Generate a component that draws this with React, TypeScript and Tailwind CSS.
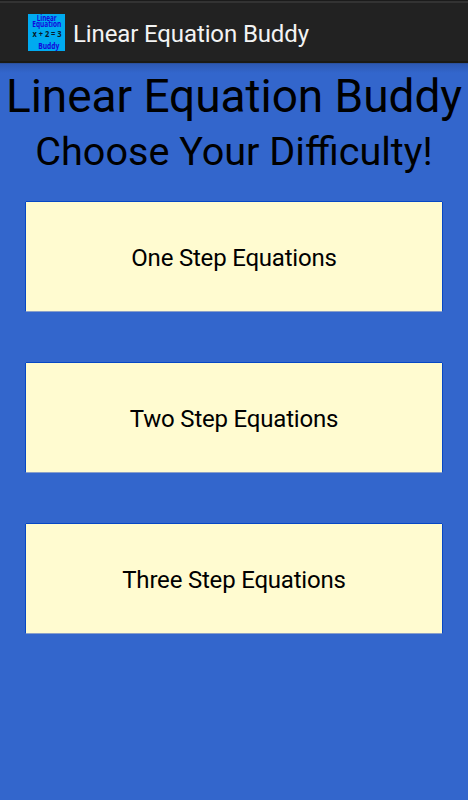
const levels = ["One Step Equations", "Two Step Equations", "Three Step Equations"];

function AppIcon() {
  return (
    <svg
      viewBox="0 0 37 37"
      className="h-[37px] w-[37px] shrink-0 bg-[#00aaf0] font-['Open_Sans',sans-serif] text-[8.4px] font-bold"
      fill="#1408dc"
    >
      <text x="8.7" y="6.9" textLength="20" lengthAdjust="spacingAndGlyphs">Linear</text>
      <text x="4.3" y="12.9" textLength="29" lengthAdjust="spacingAndGlyphs">Equation</text>
      <text x="4.5" y="23.2" textLength="29" lengthAdjust="spacingAndGlyphs" fill="#061a2c">x + 2 = 3</text>
      <text x="10.2" y="34.8" textLength="21" lengthAdjust="spacingAndGlyphs">Buddy</text>
    </svg>
  );
}

export default function App() {
  return (
    <div className="flex h-[800px] w-full flex-col overflow-hidden bg-[#3366cc] font-[Roboto,sans-serif] text-black">
      <header className="flex h-[63px] shrink-0 items-center border-t border-[#1b1b1b] bg-[linear-gradient(#333_0px,#333_2px,#222_2px,#222_60px,#1b1a14_60px)] pt-[1px] pl-[28px]">
        <AppIcon />
        <span className="mt-[2px] ml-[8px] text-[24px] leading-[28px] tracking-[-0.12px] whitespace-nowrap text-[#f3f3f3]">Linear Equation Buddy</span>
      </header>
      <main className="flex flex-1 flex-col items-center bg-[linear-gradient(#2a4a88_0px,#2d59b3_1px,#3366cc_10px)]">
        <h1 className="mt-[5px] text-[46px] leading-[56px] tracking-[-0.04px] whitespace-nowrap">Linear Equation Buddy</h1>
        <h2 className="mt-[4px] text-[39.6px] leading-[48px] whitespace-nowrap">Choose Your Difficulty!</h2>
        <div className="mt-[26px] flex w-[416px] flex-col gap-[52px]">
          {levels.map((level) => (
            <button
              key={level}
              className="h-[109px] w-full bg-[#fffbd0] pt-[2px] text-[24px] leading-[28px] tracking-[-0.2px] shadow-[0_-1px_0_#0647c4,-1px_0_0_#0647c4,1px_0_0_#0647c4,0_1px_0_#8ba0c8]"
            >
              {level}
            </button>
          ))}
        </div>
      </main>
    </div>
  );
}
